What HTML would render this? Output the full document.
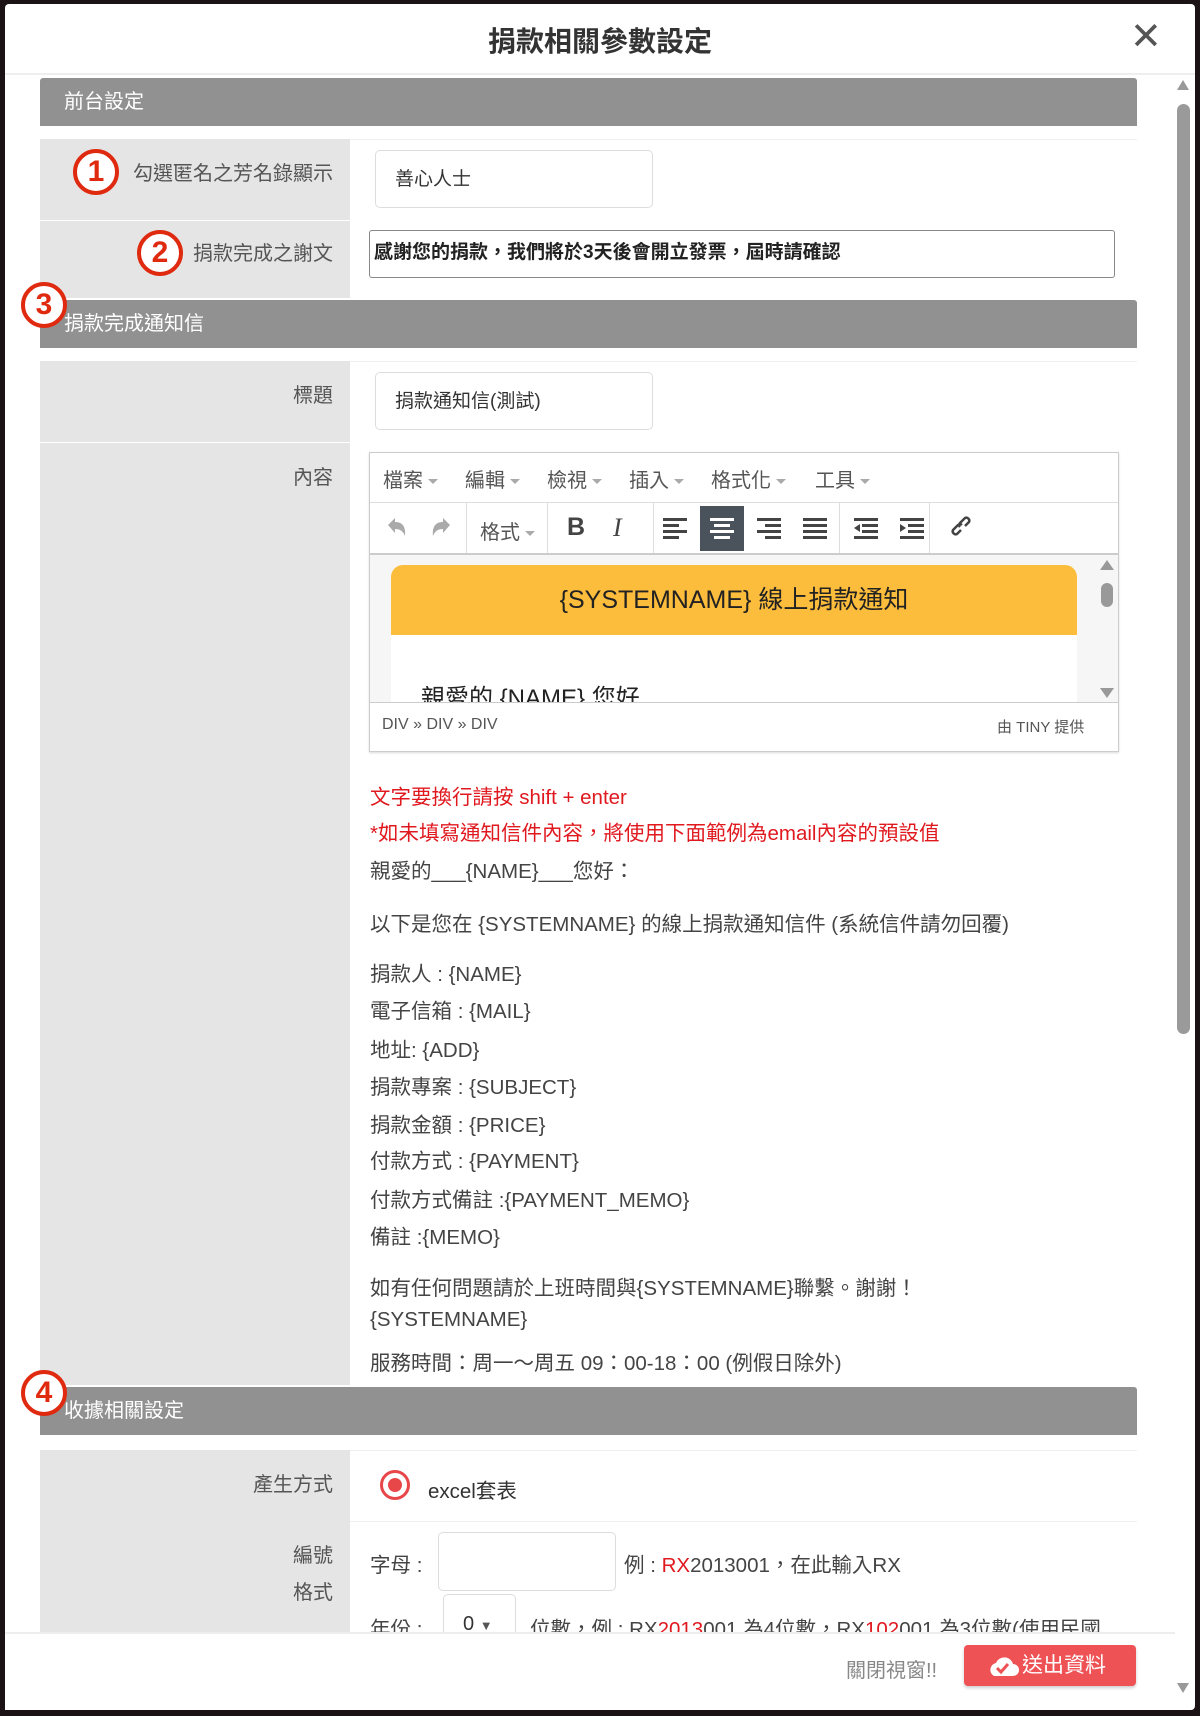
<!DOCTYPE html>
<html><head><meta charset="utf-8"><style>
*{box-sizing:border-box;margin:0;padding:0}
body{width:1200px;height:1716px;background:#1a1214;position:relative;overflow:hidden;font-family:"Liberation Sans","Noto Sans CJK TC",sans-serif;color:#333}
.a{position:absolute}
.modal{left:5px;top:4px;width:1190px;height:1706px;background:#fff;border-radius:4px}
.bar{left:40px;width:1097px;height:48px;background:#919191;color:#fff;font-size:20px;line-height:48px;padding-left:24px;border-radius:3px 3px 0 0}
.lab{left:40px;width:310px;background:#e5e5e5;color:#555;font-size:20px;text-align:right;padding-right:17px}
.rowb{left:350px;width:787px;border-top:1px solid #f0f0f0}
.inp{border:1px solid #ddd;border-radius:5px;background:#fff;font-size:19px;color:#333;padding-left:19px}
.txt{left:370px;font-size:20.5px;color:#444;white-space:nowrap}
.red{color:#e0191f}
.circ{width:46px;height:46px;border:4px solid #e02a10;border-radius:50%;background:#fff;color:#e02a10;font-size:30px;font-weight:bold;text-align:center;line-height:38px}
.tb{font-size:20px;color:#555;top:464px}
.dd{display:inline-block;border-left:5px solid transparent;border-right:5px solid transparent;border-top:5px solid #aaa;vertical-align:middle;margin-left:5px}
</style></head><body>
<div class="a modal"></div>
<div class="a" style="left:0;top:20px;width:1200px;text-align:center;font-size:28px;font-weight:bold;color:#333">捐款相關參數設定</div>
<div class="a" style="left:1130px;top:14px;font-size:38px;color:#555;font-weight:300">✕</div>
<div class="a" style="left:5px;top:73px;width:1190px;height:2px;background:#eee"></div>
<div class="a" style="left:1177px;top:80px;width:0;height:0;border-left:6px solid transparent;border-right:6px solid transparent;border-bottom:10px solid #999"></div>
<div class="a" style="left:1177px;top:104px;width:13px;height:930px;background:#9a9a9a;border-radius:7px"></div>
<div class="a" style="left:1177px;top:1683px;width:0;height:0;border-left:6px solid transparent;border-right:6px solid transparent;border-top:10px solid #999"></div>

<div class="a bar" style="top:78px">前台設定</div>
<div class="a lab" style="top:139px;height:81px;line-height:70px">勾選匿名之芳名錄顯示</div>
<div class="a rowb" style="top:139px;height:81px"></div>
<div class="a inp" style="left:375px;top:150px;width:278px;height:58px;line-height:58px">善心人士</div>
<div class="a lab" style="top:221px;height:77px;line-height:66px">捐款完成之謝文</div>
<div class="a" style="left:369px;top:230px;width:746px;height:48px;border:1px solid #888;border-radius:3px;font-size:19px;font-weight:bold;color:#222;padding:6px 4px">感謝您的捐款，我們將於3天後會開立發票，屆時請確認</div>

<div class="a bar" style="top:300px">捐款完成通知信</div>
<div class="a lab" style="top:361px;height:81px;line-height:70px">標題</div>
<div class="a rowb" style="top:361px;height:81px"></div>
<div class="a inp" style="left:375px;top:372px;width:278px;height:58px;line-height:58px">捐款通知信(測試)</div>
<div class="a lab" style="top:443px;height:942px;line-height:70px">內容</div>

<div class="a" style="left:369px;top:452px;width:750px;height:300px;border:1px solid #ccc;box-shadow:0 1px 2px rgba(0,0,0,.15)"></div>
<div class="a tb" style="left:383px">檔案<span class="dd"></span></div>
<div class="a tb" style="left:465px">編輯<span class="dd"></span></div>
<div class="a tb" style="left:547px">檢視<span class="dd"></span></div>
<div class="a tb" style="left:629px">插入<span class="dd"></span></div>
<div class="a tb" style="left:711px">格式化<span class="dd"></span></div>
<div class="a tb" style="left:815px">工具<span class="dd"></span></div>
<div class="a" style="left:370px;top:502px;width:748px;height:1px;background:#ddd"></div>
<div class="a" style="left:370px;top:553px;width:748px;height:2px;background:#ccc"></div>
<div class="a" style="left:466px;top:503px;width:1px;height:50px;background:#ddd"></div>
<div class="a" style="left:547px;top:503px;width:1px;height:50px;background:#ddd"></div>
<div class="a" style="left:653px;top:503px;width:1px;height:50px;background:#ddd"></div>
<div class="a" style="left:839px;top:503px;width:1px;height:50px;background:#ddd"></div>
<div class="a" style="left:929px;top:503px;width:1px;height:50px;background:#ddd"></div>
<svg class="a" style="left:384px;top:515px" width="70" height="26" fill="#aaa"><path d="M4 10l7-7v4c7 0 11 4 10 14-2-5-5-7-10-7v4z"/><path d="M66 10l-7-7v4c-7 0-11 4-10 14 2-5 5-7 10-7v4z"/></svg>
<div class="a tb" style="left:480px;top:516px">格式<span class="dd"></span></div>
<div class="a" style="left:567px;top:513px;font-size:25px;font-weight:bold;color:#444">B</div>
<div class="a" style="left:613px;top:513px;font-size:26px;font-style:italic;font-family:'Liberation Serif';color:#444">I</div>
<div class="a" style="left:700px;top:506px;width:44px;height:45px;background:#4a535c"></div>
<svg class="a" style="left:660px;top:515px" width="270" height="26" fill="#444">
<g><rect x="3" y="3" width="24" height="3"/><rect x="3" y="9" width="16" height="3"/><rect x="3" y="15" width="24" height="3"/><rect x="3" y="21" width="16" height="3"/></g>
<g fill="#fff"><rect x="50" y="3" width="24" height="3"/><rect x="54" y="9" width="16" height="3"/><rect x="50" y="15" width="24" height="3"/><rect x="54" y="21" width="16" height="3"/></g>
<g><rect x="97" y="3" width="24" height="3"/><rect x="105" y="9" width="16" height="3"/><rect x="97" y="15" width="24" height="3"/><rect x="105" y="21" width="16" height="3"/></g>
<g><rect x="143" y="3" width="24" height="3"/><rect x="143" y="9" width="24" height="3"/><rect x="143" y="15" width="24" height="3"/><rect x="143" y="21" width="24" height="3"/></g>
<g><rect x="194" y="3" width="24" height="3"/><rect x="202" y="9" width="16" height="3"/><rect x="202" y="15" width="16" height="3"/><rect x="194" y="21" width="24" height="3"/><path d="M194 13l6-4v8z"/></g>
<g><rect x="240" y="3" width="24" height="3"/><rect x="248" y="9" width="16" height="3"/><rect x="248" y="15" width="16" height="3"/><rect x="240" y="21" width="24" height="3"/><path d="M246 13l-6-4v8z"/></g>
</svg>
<svg class="a" style="left:950px;top:515px" width="26" height="26" fill="none" stroke="#444" stroke-width="2.5"><path d="M11 15l-4 4a3 3 0 01-4-4l5-5a3 3 0 014 0M15 11l4-4a3 3 0 00-4-4l-5 5a3 3 0 000 4"/></svg>
<div class="a" style="left:370px;top:555px;width:748px;height:147px;background:#f6f6f6"></div>
<div class="a" style="left:391px;top:565px;width:686px;height:137px;background:#fff;border-radius:12px 12px 0 0"></div>
<div class="a" style="left:391px;top:565px;width:686px;height:70px;background:#fcbd3c;border-radius:12px 12px 0 0;text-align:center;line-height:70px;font-size:25px;color:#222">{SYSTEMNAME} 線上捐款通知</div>
<div class="a" style="left:391px;top:680px;width:686px;height:22px;overflow:hidden"><div style="margin:-2px 0 0 30px;font-size:24px;color:#222">親愛的 {NAME} 您好</div></div>
<div class="a" style="left:1100px;top:560px;width:0;height:0;border-left:7px solid transparent;border-right:7px solid transparent;border-bottom:10px solid #999"></div>
<div class="a" style="left:1101px;top:583px;width:12px;height:24px;background:#999;border-radius:6px"></div>
<div class="a" style="left:1100px;top:688px;width:0;height:0;border-left:7px solid transparent;border-right:7px solid transparent;border-top:10px solid #999"></div>
<div class="a" style="left:370px;top:702px;width:748px;height:1px;background:#ccc"></div>
<div class="a" style="left:382px;top:716px;font-size:16px;color:#555">DIV » DIV » DIV</div>
<div class="a" style="left:997px;top:716px;font-size:15px;color:#555">由 TINY 提供</div>

<div class="a txt red" style="top:780px">文字要換行請按 shift + enter</div>
<div class="a txt red" style="top:816px">*如未填寫通知信件內容，將使用下面範例為email內容的預設值</div>
<div class="a txt" style="top:854px">親愛的___{NAME}___您好：</div>
<div class="a txt" style="top:907px">以下是您在 {SYSTEMNAME} 的線上捐款通知信件 (系統信件請勿回覆)</div>
<div class="a txt" style="top:957px">捐款人 : {NAME}</div>
<div class="a txt" style="top:994px">電子信箱 : {MAIL}</div>
<div class="a txt" style="top:1033px">地址: {ADD}</div>
<div class="a txt" style="top:1070px">捐款專案 : {SUBJECT}</div>
<div class="a txt" style="top:1108px">捐款金額 : {PRICE}</div>
<div class="a txt" style="top:1144px">付款方式 : {PAYMENT}</div>
<div class="a txt" style="top:1183px">付款方式備註 :{PAYMENT_MEMO}</div>
<div class="a txt" style="top:1220px">備註 :{MEMO}</div>
<div class="a txt" style="top:1271px">如有任何問題請於上班時間與{SYSTEMNAME}聯繫。謝謝！</div>
<div class="a txt" style="top:1308px">{SYSTEMNAME}</div>
<div class="a txt" style="top:1346px">服務時間：周一～周五 09：00-18：00 (例假日除外)</div>

<div class="a bar" style="top:1387px">收據相關設定</div>
<div class="a lab" style="top:1450px;height:71px;line-height:70px">產生方式</div>
<div class="a rowb" style="top:1450px;height:71px"></div>
<div class="a" style="left:380px;top:1470px;width:30px;height:30px;border:3px solid #e8474a;border-radius:50%;background:#fff"><div style="margin:5px;width:14px;height:14px;border-radius:50%;background:#e8474a"></div></div>
<div class="a txt" style="left:428px;top:1474px;color:#333">excel套表</div>
<div class="a lab" style="top:1521px;height:111px;line-height:37px;padding-top:17px">編號<br>格式</div>
<div class="a rowb" style="top:1521px;height:111px"></div>
<div class="a txt" style="top:1548px">字母 :</div>
<div class="a inp" style="left:438px;top:1532px;width:178px;height:59px"></div>
<div class="a txt" style="left:624px;top:1548px">例 : <span class="red">RX</span>2013001，在此輸入RX</div>
<div class="a txt" style="top:1612px">年份 :</div>
<div class="a inp" style="left:443px;top:1594px;width:73px;height:50px;padding-top:18px;font-size:20px">0 <span style="font-size:13px;color:#555">▼</span></div>
<div class="a txt" style="left:530px;top:1612px">位數，例 : RX<span class="red">2013</span>001 為4位數，RX<span class="red">102</span>001 為3位數(使用民國</div>

<div class="a" style="left:5px;top:1632px;width:1170px;height:78px;background:#fff;border-top:2px solid #eee"></div>
<div class="a" style="left:846px;top:1654px;font-size:20px;color:#888">關閉視窗!!</div>
<div class="a" style="left:964px;top:1645px;width:172px;height:41px;background:#ee5255;border-radius:4px;box-shadow:0 2px 3px rgba(0,0,0,.2);color:#fff;font-size:21px;line-height:41px;padding-left:58px">送出資料</div>
<svg class="a" style="left:986px;top:1654px" width="34" height="24"><path d="M8 22h19a6 6 0 000-12 9 9 0 00-17-1 7 7 0 00-2 13z" fill="#fff"/><path d="M11 14l4 4 7-8" fill="none" stroke="#ee5255" stroke-width="3"/></svg>

<div class="a circ" style="left:73px;top:149px">1</div>
<div class="a circ" style="left:137px;top:230px">2</div>
<div class="a circ" style="left:21px;top:282px">3</div>
<div class="a circ" style="left:21px;top:1370px">4</div>
</body></html>
